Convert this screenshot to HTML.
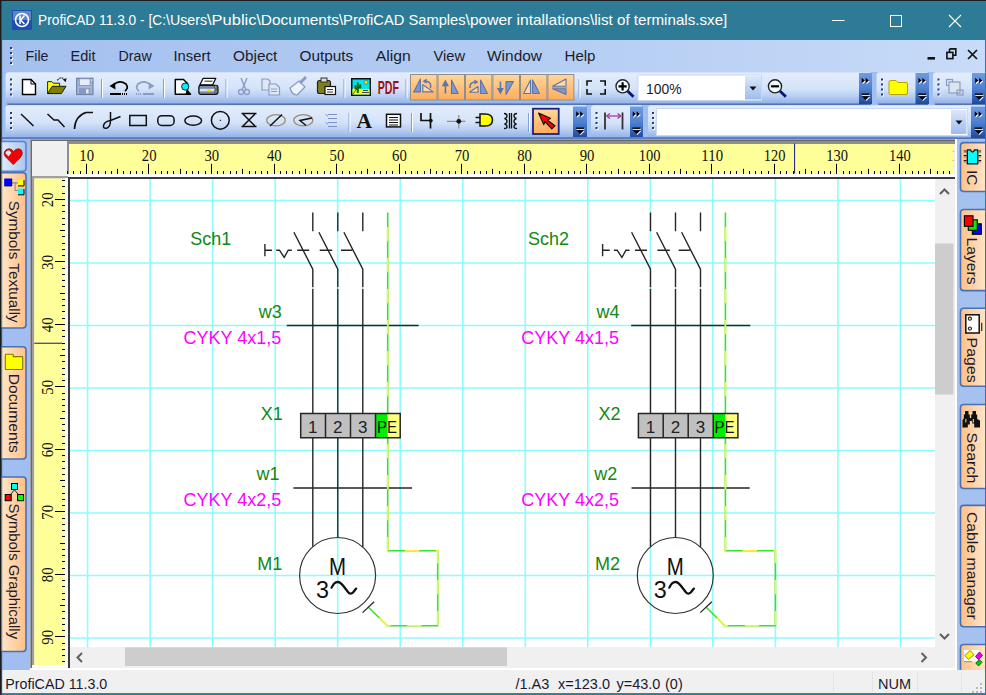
<!DOCTYPE html>
<html><head><meta charset="utf-8"><title>ProfiCAD</title>
<style>
html,body{margin:0;padding:0;background:#1c1c1c;overflow:hidden;}
body{width:986px;height:695px;position:relative;}
svg{position:absolute;left:0;top:0;display:block;}

</style></head><body>
<svg width="986" height="695" viewBox="0 0 986 695" font-family="'Liberation Sans', sans-serif">
<defs>
 <linearGradient id="menuG" x1="0" y1="0" x2="1" y2="0">
  <stop offset="0" stop-color="#a4c0ee"/><stop offset="0.55" stop-color="#b4cdf3"/><stop offset="1" stop-color="#c8dbf8"/>
 </linearGradient>
 <linearGradient id="tbG" x1="0" y1="0" x2="0" y2="1">
  <stop offset="0" stop-color="#e3edfc"/><stop offset="0.5" stop-color="#d5e3f9"/><stop offset="0.72" stop-color="#b9d0f3"/><stop offset="0.9" stop-color="#9ab8ea"/><stop offset="1" stop-color="#92b2e8"/>
 </linearGradient>
 <linearGradient id="chevG" x1="0" y1="0" x2="0" y2="1">
  <stop offset="0" stop-color="#6f9de2"/><stop offset="0.5" stop-color="#4f80d0"/><stop offset="1" stop-color="#1b4a9e"/>
 </linearGradient>
 <linearGradient id="orG" x1="0" y1="0" x2="0" y2="1">
  <stop offset="0" stop-color="#ffd79c"/><stop offset="1" stop-color="#ffac5a"/>
 </linearGradient>
 <linearGradient id="tabOr" x1="0" y1="0" x2="1" y2="0">
  <stop offset="0" stop-color="#ffe6c8"/><stop offset="1" stop-color="#ffc088"/>
 </linearGradient>
 <linearGradient id="tabOrR" x1="0" y1="0" x2="1" y2="0">
  <stop offset="0" stop-color="#ffc088"/><stop offset="1" stop-color="#ffe6c8"/>
 </linearGradient>
 <linearGradient id="tabBl" x1="0" y1="0" x2="1" y2="0">
  <stop offset="0" stop-color="#e2edfc"/><stop offset="1" stop-color="#a9c6f0"/>
 </linearGradient>
 <linearGradient id="ddG" x1="0" y1="0" x2="0" y2="1">
  <stop offset="0" stop-color="#dce8fa"/><stop offset="1" stop-color="#9dbcec"/>
 </linearGradient>
 <clipPath id="cv"><rect x="70" y="179" width="865" height="468.3"/></clipPath><clipPath id="hr"><rect x="69" y="143" width="884.5" height="31"/></clipPath>
</defs>

<rect x="1" y="1" width="985" height="39" fill="#2e7b97"/>
<rect x="12" y="10" width="20" height="20" fill="#1f4fae"/><rect x="13" y="11" width="18" height="9" fill="#5f86c8"/><circle cx="22" cy="20" r="6.5" fill="none" stroke="#fff" stroke-width="1.6"/><path d="M20 15.5 V24 M24.5 15.5 L20.5 20 L24.5 24" fill="none" stroke="#fff" stroke-width="1.5"/>
<text x="38" y="25.2" font-size="14.2" fill="#ffffff" textLength="128.0" lengthAdjust="spacingAndGlyphs">ProfiCAD 11.3.0 - [C:</text>
<text x="166" y="25.2" font-size="14.2" fill="#ffffff" textLength="41.0" lengthAdjust="spacingAndGlyphs">\Users</text>
<text x="207" y="25.2" font-size="14.2" fill="#ffffff" textLength="49.5" lengthAdjust="spacingAndGlyphs">\Public</text>
<text x="256.5" y="25.2" font-size="14.2" fill="#ffffff" textLength="82.5" lengthAdjust="spacingAndGlyphs">\Documents</text>
<text x="339" y="25.2" font-size="14.2" fill="#ffffff" textLength="126.6" lengthAdjust="spacingAndGlyphs">\ProfiCAD Samples</text>
<text x="465.6" y="25.2" font-size="14.2" fill="#ffffff" textLength="124.4" lengthAdjust="spacingAndGlyphs">\power intallations</text>
<text x="590" y="25.2" font-size="14.2" fill="#ffffff" textLength="137.3" lengthAdjust="spacingAndGlyphs">\list of terminals.sxe]</text>
<path d="M832 20.5 H844.5" stroke="#fff" stroke-width="1"/>
<rect x="890.5" y="15.5" width="11" height="11" fill="none" stroke="#fff" stroke-width="1"/>
<path d="M949 15 L961 27 M961 15 L949 27" stroke="#fff" stroke-width="1.1"/>
<rect x="2" y="40" width="983" height="630" fill="#a0bef0"/>
<rect x="2" y="40" width="983" height="32" fill="url(#menuG)"/>
<rect x="11" y="48" width="2" height="2" fill="#ffffff"/><rect x="10" y="47" width="2" height="2" fill="#27387a"/><rect x="11" y="53" width="2" height="2" fill="#ffffff"/><rect x="10" y="52" width="2" height="2" fill="#27387a"/><rect x="11" y="58" width="2" height="2" fill="#ffffff"/><rect x="10" y="57" width="2" height="2" fill="#27387a"/><rect x="11" y="63" width="2" height="2" fill="#ffffff"/><rect x="10" y="62" width="2" height="2" fill="#27387a"/>
<text x="25.5" y="60.6" font-size="14.3" fill="#1b1b2e" textLength="23" lengthAdjust="spacingAndGlyphs">File</text>
<text x="70.5" y="60.6" font-size="14.3" fill="#1b1b2e" textLength="25" lengthAdjust="spacingAndGlyphs">Edit</text>
<text x="118.5" y="60.6" font-size="14.3" fill="#1b1b2e" textLength="33.2" lengthAdjust="spacingAndGlyphs">Draw</text>
<text x="173.5" y="60.6" font-size="14.3" fill="#1b1b2e" textLength="37" lengthAdjust="spacingAndGlyphs">Insert</text>
<text x="233" y="60.6" font-size="14.3" fill="#1b1b2e" textLength="44.4" lengthAdjust="spacingAndGlyphs">Object</text>
<text x="299.5" y="60.6" font-size="14.3" fill="#1b1b2e" textLength="53.8" lengthAdjust="spacingAndGlyphs">Outputs</text>
<text x="375.8" y="60.6" font-size="14.3" fill="#1b1b2e" textLength="35" lengthAdjust="spacingAndGlyphs">Align</text>
<text x="433.5" y="60.6" font-size="14.3" fill="#1b1b2e" textLength="31.5" lengthAdjust="spacingAndGlyphs">View</text>
<text x="487" y="60.6" font-size="14.3" fill="#1b1b2e" textLength="55" lengthAdjust="spacingAndGlyphs">Window</text>
<text x="564.5" y="60.6" font-size="14.3" fill="#1b1b2e" textLength="31" lengthAdjust="spacingAndGlyphs">Help</text>
<rect x="927.5" y="57" width="7.5" height="2.6" fill="#111"/>
<path d="M949.5 48.9 H955.8 V55.2 H952.5 M949.5 48.9 V52" fill="none" stroke="#111" stroke-width="1.6"/><rect x="946.9" y="52.4" width="6" height="6.2" fill="none" stroke="#111" stroke-width="1.6"/>
<path d="M968 50 L977 59 M977 50 L968 59" stroke="#111" stroke-width="1.7"/>
<rect x="5.5" y="72.3" width="866.5" height="32.7" rx="3" fill="url(#tbG)"/><rect x="7.5" y="103.4" width="863.5" height="1.6" fill="#5474b4"/>
<rect x="859" y="73" width="13" height="31" fill="url(#chevG)"/><path d="M862.5 78.60000000000001 L865.6999999999999 81.4 L862.5 84.2 Z M866.5 78.60000000000001 L869.6999999999999 81.4 L866.5 84.2 Z" fill="#ffffff"/><path d="M861.7 77.7 L864.9 80.5 L861.7 83.3 Z M865.7 77.7 L868.9 80.5 L865.7 83.3 Z" fill="#000000"/><rect x="861.9" y="94.4" width="8" height="1.4" fill="#fff"/><path d="M862.3 97.1 H870.3 L866.3 101.1 Z" fill="#fff"/><rect x="861.5" y="93.5" width="8" height="1.4" fill="#000"/><path d="M861.5 96.2 H869.5 L865.5 100.2 Z" fill="#000"/>
<rect x="876.5" y="72.3" width="52.5" height="32.7" rx="3" fill="url(#tbG)"/><rect x="878.5" y="103.4" width="49.5" height="1.6" fill="#5474b4"/>
<rect x="915.5" y="73" width="13.5" height="31" fill="url(#chevG)"/><path d="M919.25 78.60000000000001 L922.4499999999999 81.4 L919.25 84.2 Z M923.25 78.60000000000001 L926.4499999999999 81.4 L923.25 84.2 Z" fill="#ffffff"/><path d="M918.45 77.7 L921.65 80.5 L918.45 83.3 Z M922.45 77.7 L925.65 80.5 L922.45 83.3 Z" fill="#000000"/><rect x="918.65" y="94.4" width="8" height="1.4" fill="#fff"/><path d="M919.05 97.1 H927.05 L923.05 101.1 Z" fill="#fff"/><rect x="918.25" y="93.5" width="8" height="1.4" fill="#000"/><path d="M918.25 96.2 H926.25 L922.25 100.2 Z" fill="#000"/>
<rect x="933" y="72.3" width="57" height="32.7" rx="3" fill="url(#tbG)"/><rect x="935" y="103.4" width="54" height="1.6" fill="#5474b4"/>
<rect x="972" y="73" width="14" height="31" fill="url(#chevG)"/><path d="M976.0 78.60000000000001 L979.1999999999999 81.4 L976.0 84.2 Z M980.0 78.60000000000001 L983.1999999999999 81.4 L980.0 84.2 Z" fill="#ffffff"/><path d="M975.2 77.7 L978.4 80.5 L975.2 83.3 Z M979.2 77.7 L982.4 80.5 L979.2 83.3 Z" fill="#000000"/><rect x="975.4" y="94.4" width="8" height="1.4" fill="#fff"/><path d="M975.8 97.1 H983.8 L979.8 101.1 Z" fill="#fff"/><rect x="975.0" y="93.5" width="8" height="1.4" fill="#000"/><path d="M975.0 96.2 H983.0 L979.0 100.2 Z" fill="#000"/>
<rect x="5.5" y="105.3" width="581.5" height="33.7" rx="3" fill="url(#tbG)"/><rect x="7.5" y="137.4" width="578.5" height="1.6" fill="#5474b4"/>
<rect x="573" y="106.5" width="14" height="31.5" fill="url(#chevG)"/><path d="M577.0 112.10000000000001 L580.1999999999999 114.9 L577.0 117.7 Z M581.0 112.10000000000001 L584.1999999999999 114.9 L581.0 117.7 Z" fill="#ffffff"/><path d="M576.2 111.2 L579.4 114.0 L576.2 116.8 Z M580.2 111.2 L583.4 114.0 L580.2 116.8 Z" fill="#000000"/><rect x="576.4" y="128.4" width="8" height="1.4" fill="#fff"/><path d="M576.8 131.1 H584.8 L580.8 135.1 Z" fill="#fff"/><rect x="576.0" y="127.5" width="8" height="1.4" fill="#000"/><path d="M576.0 130.2 H584.0 L580.0 134.2 Z" fill="#000"/>
<rect x="591" y="105.3" width="52" height="33.7" rx="3" fill="url(#tbG)"/><rect x="593" y="137.4" width="49" height="1.6" fill="#5474b4"/>
<rect x="630" y="106.5" width="13" height="31.5" fill="url(#chevG)"/><path d="M633.5 112.10000000000001 L636.6999999999999 114.9 L633.5 117.7 Z M637.5 112.10000000000001 L640.6999999999999 114.9 L637.5 117.7 Z" fill="#ffffff"/><path d="M632.7 111.2 L635.9 114.0 L632.7 116.8 Z M636.7 111.2 L639.9 114.0 L636.7 116.8 Z" fill="#000000"/><rect x="632.9" y="128.4" width="8" height="1.4" fill="#fff"/><path d="M633.3 131.1 H641.3 L637.3 135.1 Z" fill="#fff"/><rect x="632.5" y="127.5" width="8" height="1.4" fill="#000"/><path d="M632.5 130.2 H640.5 L636.5 134.2 Z" fill="#000"/>
<rect x="648" y="105.3" width="342" height="33.7" rx="3" fill="url(#tbG)"/><rect x="650" y="137.4" width="339" height="1.6" fill="#5474b4"/>
<rect x="971" y="106.5" width="15" height="31.5" fill="url(#chevG)"/><path d="M975.5 112.10000000000001 L978.6999999999999 114.9 L975.5 117.7 Z M979.5 112.10000000000001 L982.6999999999999 114.9 L979.5 117.7 Z" fill="#ffffff"/><path d="M974.7 111.2 L977.9 114.0 L974.7 116.8 Z M978.7 111.2 L981.9 114.0 L978.7 116.8 Z" fill="#000000"/><rect x="974.9" y="128.4" width="8" height="1.4" fill="#fff"/><path d="M975.3 131.1 H983.3 L979.3 135.1 Z" fill="#fff"/><rect x="974.5" y="127.5" width="8" height="1.4" fill="#000"/><path d="M974.5 130.2 H982.5 L978.5 134.2 Z" fill="#000"/>
<rect x="11" y="79.5" width="2" height="2" fill="#ffffff"/><rect x="10" y="78.5" width="2" height="2" fill="#27387a"/><rect x="11" y="84.5" width="2" height="2" fill="#ffffff"/><rect x="10" y="83.5" width="2" height="2" fill="#27387a"/><rect x="11" y="89.5" width="2" height="2" fill="#ffffff"/><rect x="10" y="88.5" width="2" height="2" fill="#27387a"/><rect x="11" y="94.5" width="2" height="2" fill="#ffffff"/><rect x="10" y="93.5" width="2" height="2" fill="#27387a"/>
<rect x="882" y="79.5" width="2" height="2" fill="#ffffff"/><rect x="881" y="78.5" width="2" height="2" fill="#27387a"/><rect x="882" y="84.5" width="2" height="2" fill="#ffffff"/><rect x="881" y="83.5" width="2" height="2" fill="#27387a"/><rect x="882" y="89.5" width="2" height="2" fill="#ffffff"/><rect x="881" y="88.5" width="2" height="2" fill="#27387a"/><rect x="882" y="94.5" width="2" height="2" fill="#ffffff"/><rect x="881" y="93.5" width="2" height="2" fill="#27387a"/>
<rect x="938.5" y="79.5" width="2" height="2" fill="#ffffff"/><rect x="937.5" y="78.5" width="2" height="2" fill="#27387a"/><rect x="938.5" y="84.5" width="2" height="2" fill="#ffffff"/><rect x="937.5" y="83.5" width="2" height="2" fill="#27387a"/><rect x="938.5" y="89.5" width="2" height="2" fill="#ffffff"/><rect x="937.5" y="88.5" width="2" height="2" fill="#27387a"/><rect x="938.5" y="94.5" width="2" height="2" fill="#ffffff"/><rect x="937.5" y="93.5" width="2" height="2" fill="#27387a"/>
<rect x="11" y="113" width="2" height="2" fill="#ffffff"/><rect x="10" y="112" width="2" height="2" fill="#27387a"/><rect x="11" y="118" width="2" height="2" fill="#ffffff"/><rect x="10" y="117" width="2" height="2" fill="#27387a"/><rect x="11" y="123" width="2" height="2" fill="#ffffff"/><rect x="10" y="122" width="2" height="2" fill="#27387a"/><rect x="11" y="128" width="2" height="2" fill="#ffffff"/><rect x="10" y="127" width="2" height="2" fill="#27387a"/>
<rect x="596.5" y="113" width="2" height="2" fill="#ffffff"/><rect x="595.5" y="112" width="2" height="2" fill="#27387a"/><rect x="596.5" y="118" width="2" height="2" fill="#ffffff"/><rect x="595.5" y="117" width="2" height="2" fill="#27387a"/><rect x="596.5" y="123" width="2" height="2" fill="#ffffff"/><rect x="595.5" y="122" width="2" height="2" fill="#27387a"/><rect x="596.5" y="128" width="2" height="2" fill="#ffffff"/><rect x="595.5" y="127" width="2" height="2" fill="#27387a"/>
<rect x="653" y="113" width="2" height="2" fill="#ffffff"/><rect x="652" y="112" width="2" height="2" fill="#27387a"/><rect x="653" y="118" width="2" height="2" fill="#ffffff"/><rect x="652" y="117" width="2" height="2" fill="#27387a"/><rect x="653" y="123" width="2" height="2" fill="#ffffff"/><rect x="652" y="122" width="2" height="2" fill="#27387a"/><rect x="653" y="128" width="2" height="2" fill="#ffffff"/><rect x="652" y="127" width="2" height="2" fill="#27387a"/>
<path d="M22.5 79.5 H31 L35.5 84 V94.5 H22.5 Z" fill="#fff" stroke="#000" stroke-width="1.4"/><path d="M31 79.5 V84 H35.5" fill="none" stroke="#000" stroke-width="1"/><path d="M47.6 81.6 H51.8 L53.3 83.2 H59.6 V93.5 H47.6 Z" fill="#ffff00" stroke="#222" stroke-width="1"/><path d="M47.6 93.6 L52.2 86.3 H66 L61.4 93.6 Z" fill="#808000" stroke="#1a1a1a" stroke-width="1" stroke-linejoin="round"/><path d="M57.3 80.3 Q60.5 76.2 64 78.8" fill="none" stroke="#222" stroke-width="1.2" stroke-dasharray="1.6 1"/><path d="M62.6 79.3 L66.6 78.3 L65.6 82.3 Z" fill="#111"/><rect x="76.7" y="78.3" width="16.2" height="16.2" fill="#a9b8d8" stroke="#7283ac" stroke-width="1.3"/><rect x="79.3" y="78.8" width="10.8" height="6.8" fill="#e6edf8" stroke="#7d8db4" stroke-width="0.8"/><rect x="79" y="88.2" width="11.4" height="6" fill="#8797bd"/><rect x="86" y="89.2" width="2.6" height="4.2" fill="#e6edf8"/><rect x="91.2" y="79.4" width="1" height="1.2" fill="#fff"/><rect x="101" y="79" width="1" height="19" fill="#7f9fd6"/><rect x="102" y="79" width="1" height="19" fill="#ffffff"/><path d="M113 85.5 Q119 79 126 84 Q129 88 125 91" fill="none" stroke="#000" stroke-width="1.6"/><path d="M109.5 86 L115 82.5 L115.5 89.5 Z" fill="#000"/><rect x="110" y="93" width="11" height="2" fill="#000"/><rect x="122" y="93" width="1" height="2" fill="#000"/><rect x="124" y="93" width="1" height="2" fill="#000"/><rect x="126" y="93" width="1" height="2" fill="#000"/><path d="M151 85.5 Q145 79 138 84 Q135 88 139 91" fill="none" stroke="#8a9cc4" stroke-width="1.6"/><path d="M154.5 86 L149 82.5 L148.5 89.5 Z" fill="#8a9cc4"/><rect x="143" y="93" width="11" height="2" fill="#8a9cc4"/><rect x="136" y="93" width="1" height="2" fill="#8a9cc4"/><rect x="138" y="93" width="1" height="2" fill="#8a9cc4"/><rect x="140" y="93" width="1" height="2" fill="#8a9cc4"/><rect x="163" y="79" width="1" height="19" fill="#7f9fd6"/><rect x="164" y="79" width="1" height="19" fill="#ffffff"/><path d="M175.3 79.5 H183.5 L187.5 83.5 V91 L190.5 94.3 H175.3 Z" fill="#fff" stroke="#000" stroke-width="1.5" stroke-linejoin="round"/><path d="M186.5 90 L190.5 94.3 H185.5 Z" fill="#000"/><circle cx="185.2" cy="86.6" r="3.6" fill="#00f0ff" stroke="#111" stroke-width="0.9"/><path d="M203.2 78.3 H215.8 L212.6 85 H199.8 Z" fill="#fff" stroke="#111" stroke-width="1.3" stroke-linejoin="round"/><path d="M204.5 81.2 H212.5" stroke="#555" stroke-width="1.3"/><rect x="198.9" y="85.3" width="19" height="9" rx="1.8" fill="#7d8aa3" stroke="#111" stroke-width="1.3"/><rect x="199.8" y="88.8" width="14.5" height="2.6" fill="#d2e5fb"/><rect x="207" y="89.2" width="4" height="1.8" fill="#f2e400"/><circle cx="215.8" cy="87" r="1.4" fill="#9aa" stroke="#333" stroke-width="0.7"/><circle cx="216" cy="91.5" r="1.4" fill="#9aa" stroke="#333" stroke-width="0.7"/><rect x="225.5" y="79" width="1" height="19" fill="#7f9fd6"/><rect x="226.5" y="79" width="1" height="19" fill="#ffffff"/><path d="M241 78 L246 90 M247 78 L242 90" stroke="#8a9cc4" stroke-width="1.4"/><circle cx="241" cy="92" r="2.5" fill="none" stroke="#8a9cc4" stroke-width="1.3"/><circle cx="247" cy="92" r="2.5" fill="none" stroke="#8a9cc4" stroke-width="1.3"/><path d="M262 79 H268 L270 81 V90 H262 Z" fill="#dfe7f6" stroke="#8a9cc4" stroke-width="1.2"/><path d="M269 84 H276 L279.5 87.5 V95 H269 Z" fill="#dfe7f6" stroke="#8a9cc4" stroke-width="1.2"/><path d="M271 89 H277 M271 91.5 H277" stroke="#8a9cc4" stroke-width="1"/><path d="M290 88 L299 81 L305 87 L297 95 Q292 95 290 88 Z" fill="#eef2fa" stroke="#8a9cc4" stroke-width="1.3"/><path d="M300 83 L306 77" stroke="#8a9cc4" stroke-width="3"/><rect x="289" y="95.5" width="8" height="2" fill="#c8d2e6"/><rect x="317.5" y="80.5" width="13" height="13" rx="2" fill="#7f7f1a" stroke="#222" stroke-width="1.2"/><rect x="321" y="78" width="6" height="4" fill="#ddd" stroke="#333" stroke-width="1"/><rect x="325" y="86.5" width="10.5" height="8" fill="#fff" stroke="#111" stroke-width="1.2"/><path d="M327 89.5 H333 M327 92 H333" stroke="#333" stroke-width="1"/><rect x="343.5" y="79" width="1" height="19" fill="#7f9fd6"/><rect x="344.5" y="79" width="1" height="19" fill="#ffffff"/><rect x="351" y="78" width="20" height="18" fill="#111"/><rect x="352.5" y="79.5" width="17" height="15" fill="#00e6f0"/><path d="M352.5 94.5 V89 L356 87.5 L361 89 H369.5 V94.5 Z" fill="#ffff00"/><path d="M352.5 94.5 L358 87.5" stroke="#333" stroke-width="0.8"/><circle cx="366" cy="82.3" r="1.9" fill="#ffe000" stroke="#555" stroke-width="0.6"/><path d="M357.8 93 V82.5 M355.5 85 V88.5 H357.8 M360.2 84.2 V87.5 H357.8" fill="none" stroke="#0a6a18" stroke-width="2"/><path d="M362 92.5 H369 M363 90.5 H368" stroke="#444" stroke-width="1.1"/><text x="377.8" y="94" font-family="'Liberation Sans', sans-serif" font-weight="bold" font-size="19" fill="#9e1010" textLength="21.2" lengthAdjust="spacingAndGlyphs">PDF</text><rect x="405.5" y="79" width="1" height="19" fill="#7f9fd6"/><rect x="406.5" y="79" width="1" height="19" fill="#ffffff"/><rect x="410.5" y="74.5" width="26.5" height="25.5" fill="url(#orG)" stroke="#8e8e8e" stroke-width="1"/><rect x="438.0" y="74.5" width="26.5" height="25.5" fill="url(#orG)" stroke="#8e8e8e" stroke-width="1"/><rect x="465.5" y="74.5" width="26.399999999999977" height="25.5" fill="url(#orG)" stroke="#8e8e8e" stroke-width="1"/><rect x="492.9" y="74.5" width="26.600000000000023" height="25.5" fill="url(#orG)" stroke="#8e8e8e" stroke-width="1"/><rect x="520.5" y="74.5" width="26.399999999999977" height="25.5" fill="url(#orG)" stroke="#8e8e8e" stroke-width="1"/><rect x="547.9" y="74.5" width="26.0" height="25.5" fill="url(#orG)" stroke="#8e8e8e" stroke-width="1"/><path d="M420.4 79 V91.9 H413.7 Z" fill="#7f98cc" stroke="#5a74b0" stroke-width="1.1" stroke-linejoin="round"/><path d="M422.8 84.8 V91.9 H433.3 Z" fill="#ffd8a8" stroke="#5a74b0" stroke-width="1.1" stroke-linejoin="round"/><path d="M430.5 88 Q432 82 426 81.2" fill="none" stroke="#5a74b0" stroke-width="1.5"/><path d="M422.6 81.2 L426.6 78.6 V83.8 Z" fill="#5a74b0"/><path d="M445.4 84 V93.5" stroke="#5a74b0" stroke-width="1.6"/><path d="M441.8 86.2 L445.4 79.5 L449 86.2 Z" fill="#5a74b0"/><path d="M451.5 80 V93.5 H458.2 Z" fill="#7f98cc" stroke="#5a74b0" stroke-width="1.1" stroke-linejoin="round"/><path d="M469.5 92.3 H478 V86.5 Z" fill="#ffd8a8" stroke="#5a74b0" stroke-width="1.1" stroke-linejoin="round"/><path d="M470 88 Q469.5 82.5 474.5 82" fill="none" stroke="#5a74b0" stroke-width="1.5"/><path d="M478.5 82 L474.3 79.4 V84.6 Z" fill="#5a74b0"/><path d="M480.6 80 V93.5 H487.4 Z" fill="#7f98cc" stroke="#5a74b0" stroke-width="1.1" stroke-linejoin="round"/><path d="M500.4 81.6 V91" stroke="#5a74b0" stroke-width="1.6"/><path d="M497 88 L500.4 94.6 L503.8 88 Z" fill="#5a74b0"/><path d="M506 81.6 H513.5 L506 94.6 Z" fill="#7f98cc" stroke="#5a74b0" stroke-width="1.1" stroke-linejoin="round"/><path d="M530.5 80 V93.5 H523.7 Z" fill="#ffd8a8" stroke="#5a74b0" stroke-width="1.1" stroke-linejoin="round"/><path d="M532.6 80 V93.5 H539.5 Z" fill="#7f98cc" stroke="#5a74b0" stroke-width="1.1" stroke-linejoin="round"/><path d="M566 79 V86.3 H552.6 Z" fill="#ffd8a8" stroke="#5a74b0" stroke-width="1.1" stroke-linejoin="round"/><path d="M552 87.5 H567" stroke="#c8a070" stroke-width="1"/><path d="M566 88.7 V94.5 L552.6 88.7 Z" fill="#7f98cc" stroke="#5a74b0" stroke-width="1.1" stroke-linejoin="round"/><rect x="578.5" y="79" width="1" height="19" fill="#7f9fd6"/><rect x="579.5" y="79" width="1" height="19" fill="#ffffff"/><path d="M592 81 H587 V85.8 M587 89 V94 H592 M600 81 H605.2 V85.8 M605.2 89 V94 H600" fill="none" stroke="#111" stroke-width="1.6"/><circle cx="622.6" cy="86.3" r="6.6" fill="#eefcff" stroke="#222" stroke-width="1.4"/><path d="M618.5 86.3 H626.7 M622.6 82.2 V90.4" stroke="#000" stroke-width="2.2"/><path d="M627.5 91 L633.5 96.8" stroke="#0a1478" stroke-width="2.8"/><rect x="638" y="75" width="123.5" height="25.5" fill="#fff" stroke="#c9d8f2" stroke-width="1"/><rect x="745" y="76" width="16" height="23.5" fill="url(#ddG)"/><path d="M749.5 86.5 H756.5 L753 90.5Z" fill="#111"/><text x="646" y="93.7" font-size="14.8" fill="#1b1b2e" textLength="35.5" lengthAdjust="spacingAndGlyphs">100%</text><circle cx="775" cy="86.3" r="6.6" fill="#eefcff" stroke="#222" stroke-width="1.4"/><path d="M770.9 86.3 H779.1" stroke="#000" stroke-width="2.2"/><path d="M779.9 91 L785.9 96.8" stroke="#0a1478" stroke-width="2.8"/><path d="M889 82 Q889 80.5 890.5 80.5 H896 L898 82.5 H906 Q907.5 82.5 907.5 84 V93 Q907.5 94.5 906 94.5 H890.5 Q889 94.5 889 93 Z" fill="#ffff00" stroke="#b8a000" stroke-width="1"/><rect x="946.5" y="79.5" width="6" height="6" fill="none" stroke="#8a9cc4" stroke-width="1.2"/><rect x="949" y="82" width="11" height="11" fill="#dde4ee" stroke="#8a9cc4" stroke-width="1.2"/><rect x="957" y="90" width="6" height="5" fill="none" stroke="#8a9cc4" stroke-width="1.2"/>
<path d="M21 114 L33.5 126" stroke="#111" stroke-width="1.5"/><path d="M47.5 114 L54 120 L58 120 L64.5 127" fill="none" stroke="#111" stroke-width="1.5"/><path d="M74.5 129 Q75 116 86 112.5 L93 112.5" fill="none" stroke="#111" stroke-width="1.6"/><path d="M110.5 112 V120.5 Q110.5 126.5 107 128 Q103 129 103.5 125.5 Q104.5 121.5 110.5 120.5 L120.5 116.5" fill="none" stroke="#111" stroke-width="1.5"/><rect x="129.8" y="115.5" width="16.5" height="10" fill="none" stroke="#111" stroke-width="1.5"/><rect x="157.8" y="115.7" width="16.3" height="9.8" rx="4" fill="none" stroke="#111" stroke-width="1.5"/><ellipse cx="193.2" cy="120.6" rx="8.4" ry="4.6" fill="none" stroke="#111" stroke-width="1.5"/><circle cx="220.3" cy="120.3" r="8.9" fill="none" stroke="#111" stroke-width="1.5"/><rect x="219.8" y="119.8" width="1.2" height="1.2" fill="#111"/><path d="M241.5 113.5 H256.5 M241.5 126.5 H256.5 M243 114 L255 126 M255 114 L243 126" fill="none" stroke="#111" stroke-width="1.5"/><ellipse cx="276" cy="120.3" rx="9.3" ry="5.6" fill="none" stroke="#9a8a70" stroke-width="1.3"/><path d="M270 126 L282 114.5" stroke="#111" stroke-width="1.5"/><ellipse cx="303.3" cy="120.3" rx="9.6" ry="5.6" fill="none" stroke="#9a8a70" stroke-width="1.3"/><path d="M312 118 L300 120.5 L306 125.5" fill="none" stroke="#111" stroke-width="1.5"/><path d="M328 114.5 H337 M328 118.5 H337 M328 122.5 H337 M328 126.5 H337" stroke="#7d92c2" stroke-width="1.2"/><path d="M325.5 114.5 L328 116 M325.5 122.5 L328 124" stroke="#7d92c2" stroke-width="1"/><rect x="348.5" y="113" width="1" height="19" fill="#7f9fd6"/><rect x="349.5" y="113" width="1" height="19" fill="#ffffff"/><text x="356.5" y="128.2" font-family="'Liberation Serif', serif" font-weight="bold" font-size="21.5" fill="#111">A</text><rect x="386.5" y="114.3" width="14" height="12.6" fill="#fff" stroke="#111" stroke-width="1.5"/><path d="M389 117.5 H398 M389 120 H398 M389 122.5 H398 M389 125 H398" stroke="#111" stroke-width="1.1"/><rect x="411" y="113" width="1" height="19" fill="#7f9fd6"/><rect x="412" y="113" width="1" height="19" fill="#ffffff"/><path d="M421 113 V120.5 H432 M430.5 113 V128.5" fill="none" stroke="#111" stroke-width="1.7"/><circle cx="430.8" cy="120.6" r="1.9" fill="#111"/><path d="M447 121.3 H465.5 M458.8 115 V128.5" stroke="#8e8e8e" stroke-width="1.2"/><circle cx="458.8" cy="121.3" r="2.4" fill="#111"/><path d="M480 114 H485 Q492.5 114 492.5 120 Q492.5 126 485 126 H480 Z" fill="#ffff00" stroke="#111" stroke-width="1.5"/><path d="M475.5 117.5 H480 M475.5 122.5 H480" stroke="#111" stroke-width="1.5"/><path d="M504 113.5 Q507 113.5 507 116 Q507 118 504.5 118.5 Q507 119 507 121.5 Q507 123.5 504.5 124 Q507 124.5 507 127 Q507 128.5 504 128.5 M509.5 113 V128.5 M511.5 113 V128.5 M517 113.5 Q514 113.5 514 116 Q514 118 516.5 118.5 Q514 119 514 121.5 Q514 123.5 516.5 124 Q514 124.5 514 127 Q514 128.5 517 128.5" fill="none" stroke="#111" stroke-width="1.3"/><rect x="528" y="113" width="1" height="19" fill="#7f9fd6"/><rect x="529" y="113" width="1" height="19" fill="#ffffff"/><rect x="533" y="108.7" width="25.7" height="25.3" fill="url(#orG)" stroke="#1a237e" stroke-width="1.8"/><path d="M538.5 113 L550.5 118.3 L547.5 120.3 L555 125.8 L551.8 128.8 L544.8 121.5 L543.8 124.8 Z" fill="#ff0000" stroke="#111" stroke-width="1.1" stroke-linejoin="round"/><path d="M605 112.6 V129.4 M622.5 112.6 V129.4" stroke="#333" stroke-width="1.8"/><path d="M606.5 116 H621" stroke="#a0309e" stroke-width="1.2"/><path d="M606.5 116 L610 113.5 M606.5 116 L610 118.5 M621 116 L617.5 113.5 M621 116 L617.5 118.5" stroke="#a0309e" stroke-width="1.1"/><rect x="656.5" y="108.5" width="311" height="27" fill="#fff" stroke="#c9d8f2" stroke-width="1"/><rect x="951" y="110" width="15.5" height="24" fill="url(#ddG)"/><path d="M955.5 120.5 H962.5 L959 124.5Z" fill="#111"/>
<rect x="30" y="139" width="926" height="531" fill="#a0a0a0"/>
<rect x="31" y="140" width="925" height="530" fill="#696969"/>
<rect x="32" y="141" width="924" height="528" fill="#f0f0f0"/>
<rect x="67" y="141" width="889" height="3" fill="#8e8e8e"/><rect x="67" y="141" width="2" height="35" fill="#8e8e8e"/>
<rect x="69" y="144" width="884.5" height="30" fill="#ffff99"/>
<rect x="67" y="174" width="889" height="3" fill="#ffffff"/>
<rect x="32" y="176" width="36" height="2.5" fill="#a0a0a0"/><rect x="32" y="176" width="2.3" height="490" fill="#a0a0a0"/>
<rect x="34.3" y="178.5" width="30.5" height="486.5" fill="#ffff99"/>
<rect x="64.8" y="178" width="3" height="489" fill="#ffffff"/><rect x="32" y="665" width="36" height="2.5" fill="#ffffff"/>
<rect x="67.7" y="176.5" width="288" height="0" fill="none"/>
<rect x="68" y="177" width="888" height="2" fill="#3a3a3a"/><rect x="68" y="177" width="2" height="491.5" fill="#3a3a3a"/>
<rect x="70" y="179" width="865" height="468.3" fill="#ffffff"/>
<rect x="935" y="179" width="20" height="489" fill="#f0f0f0"/>
<rect x="935" y="243.5" width="18.5" height="151" fill="#cdcdcd"/>
<path d="M940 194 L944.5 189.5 L949 194" fill="none" stroke="#606060" stroke-width="2"/>
<path d="M940 634 L944.5 638.5 L949 634" fill="none" stroke="#606060" stroke-width="2"/>
<rect x="70" y="647.3" width="885" height="21" fill="#f0f0f0"/>
<rect x="125" y="647.3" width="382" height="18.7" fill="#cdcdcd"/>
<path d="M82 653 L77.5 657.5 L82 662" fill="none" stroke="#606060" stroke-width="2"/>
<path d="M921.5 653 L926 657.5 L921.5 662" fill="none" stroke="#606060" stroke-width="2"/>
<rect x="30" y="668" width="926" height="2" fill="#ffffff"/>
<path d="M67.5 171 V174 M73.5 171 V174 M80.5 171 V174 M86.5 163.8 V174 M92.5 171 V174 M98.5 171 V174 M105.5 171 V174 M111.5 171 V174 M117.5 168.8 V174 M123.5 171 V174 M130.5 171 V174 M136.5 171 V174 M142.5 171 V174 M148.5 163.8 V174 M155.5 171 V174 M161.5 171 V174 M167.5 171 V174 M173.5 171 V174 M180.5 168.8 V174 M186.5 171 V174 M192.5 171 V174 M198.5 171 V174 M205.5 171 V174 M211.5 163.8 V174 M217.5 171 V174 M223.5 171 V174 M230.5 171 V174 M236.5 171 V174 M242.5 168.8 V174 M249.5 171 V174 M255.5 171 V174 M261.5 171 V174 M267.5 171 V174 M274.5 163.8 V174 M280.5 171 V174 M286.5 171 V174 M292.5 171 V174 M299.5 171 V174 M305.5 168.8 V174 M311.5 171 V174 M317.5 171 V174 M324.5 171 V174 M330.5 171 V174 M336.5 163.8 V174 M342.5 171 V174 M349.5 171 V174 M355.5 171 V174 M361.5 171 V174 M367.5 168.8 V174 M374.5 171 V174 M380.5 171 V174 M386.5 171 V174 M392.5 171 V174 M399.5 163.8 V174 M405.5 171 V174 M411.5 171 V174 M417.5 171 V174 M424.5 171 V174 M430.5 168.8 V174 M436.5 171 V174 M442.5 171 V174 M449.5 171 V174 M455.5 171 V174 M461.5 163.8 V174 M467.5 171 V174 M474.5 171 V174 M480.5 171 V174 M486.5 171 V174 M492.5 168.8 V174 M499.5 171 V174 M505.5 171 V174 M511.5 171 V174 M517.5 171 V174 M524.5 163.8 V174 M530.5 171 V174 M536.5 171 V174 M542.5 171 V174 M549.5 171 V174 M555.5 168.8 V174 M561.5 171 V174 M568.5 171 V174 M574.5 171 V174 M580.5 171 V174 M586.5 163.8 V174 M593.5 171 V174 M599.5 171 V174 M605.5 171 V174 M611.5 171 V174 M618.5 168.8 V174 M624.5 171 V174 M630.5 171 V174 M636.5 171 V174 M643.5 171 V174 M649.5 163.8 V174 M655.5 171 V174 M661.5 171 V174 M668.5 171 V174 M674.5 171 V174 M680.5 168.8 V174 M686.5 171 V174 M693.5 171 V174 M699.5 171 V174 M705.5 171 V174 M711.5 163.8 V174 M718.5 171 V174 M724.5 171 V174 M730.5 171 V174 M736.5 171 V174 M743.5 168.8 V174 M749.5 171 V174 M755.5 171 V174 M761.5 171 V174 M768.5 171 V174 M774.5 163.8 V174 M780.5 171 V174 M786.5 171 V174 M793.5 171 V174 M799.5 171 V174 M805.5 168.8 V174 M811.5 171 V174 M818.5 171 V174 M824.5 171 V174 M830.5 171 V174 M836.5 163.8 V174 M843.5 171 V174 M849.5 171 V174 M855.5 171 V174 M861.5 171 V174 M868.5 168.8 V174 M874.5 171 V174 M880.5 171 V174 M886.5 171 V174 M893.5 171 V174 M899.5 163.8 V174 M905.5 171 V174 M912.5 171 V174 M918.5 171 V174 M924.5 171 V174 M930.5 168.8 V174 M937.5 171 V174 M943.5 171 V174 M949.5 171 V174" stroke="#000" stroke-width="1"/>
<g clip-path="url(#hr)">
<text x="86.7" y="161" font-family="'Liberation Serif', serif" font-size="16" fill="#111" text-anchor="middle" textLength="14.7" lengthAdjust="spacingAndGlyphs">10</text>
<text x="149.2" y="161" font-family="'Liberation Serif', serif" font-size="16" fill="#111" text-anchor="middle" textLength="14.7" lengthAdjust="spacingAndGlyphs">20</text>
<text x="211.8" y="161" font-family="'Liberation Serif', serif" font-size="16" fill="#111" text-anchor="middle" textLength="14.7" lengthAdjust="spacingAndGlyphs">30</text>
<text x="274.3" y="161" font-family="'Liberation Serif', serif" font-size="16" fill="#111" text-anchor="middle" textLength="14.7" lengthAdjust="spacingAndGlyphs">40</text>
<text x="336.9" y="161" font-family="'Liberation Serif', serif" font-size="16" fill="#111" text-anchor="middle" textLength="14.7" lengthAdjust="spacingAndGlyphs">50</text>
<text x="399.4" y="161" font-family="'Liberation Serif', serif" font-size="16" fill="#111" text-anchor="middle" textLength="14.7" lengthAdjust="spacingAndGlyphs">60</text>
<text x="462.0" y="161" font-family="'Liberation Serif', serif" font-size="16" fill="#111" text-anchor="middle" textLength="14.7" lengthAdjust="spacingAndGlyphs">70</text>
<text x="524.5" y="161" font-family="'Liberation Serif', serif" font-size="16" fill="#111" text-anchor="middle" textLength="14.7" lengthAdjust="spacingAndGlyphs">80</text>
<text x="587.1" y="161" font-family="'Liberation Serif', serif" font-size="16" fill="#111" text-anchor="middle" textLength="14.7" lengthAdjust="spacingAndGlyphs">90</text>
<text x="649.6" y="161" font-family="'Liberation Serif', serif" font-size="16" fill="#111" text-anchor="middle" textLength="21.7" lengthAdjust="spacingAndGlyphs">100</text>
<text x="712.2" y="161" font-family="'Liberation Serif', serif" font-size="16" fill="#111" text-anchor="middle" textLength="21.7" lengthAdjust="spacingAndGlyphs">110</text>
<text x="774.7" y="161" font-family="'Liberation Serif', serif" font-size="16" fill="#111" text-anchor="middle" textLength="21.7" lengthAdjust="spacingAndGlyphs">120</text>
<text x="837.2" y="161" font-family="'Liberation Serif', serif" font-size="16" fill="#111" text-anchor="middle" textLength="21.7" lengthAdjust="spacingAndGlyphs">130</text>
<text x="899.8" y="161" font-family="'Liberation Serif', serif" font-size="16" fill="#111" text-anchor="middle" textLength="21.7" lengthAdjust="spacingAndGlyphs">140</text>
<text x="962.3" y="161" font-family="'Liberation Serif', serif" font-size="16" fill="#111" text-anchor="middle" textLength="21.7" lengthAdjust="spacingAndGlyphs">150</text>
</g>
<path d="M62 180.5 H65 M62 186.5 H65 M62 193.5 H65 M55 199.5 H65 M62 205.5 H65 M62 211.5 H65 M62 218.5 H65 M62 224.5 H65 M60 230.5 H65 M62 236.5 H65 M62 243.5 H65 M62 249.5 H65 M62 255.5 H65 M55 261.5 H65 M62 268.5 H65 M62 274.5 H65 M62 280.5 H65 M62 286.5 H65 M60 293.5 H65 M62 299.5 H65 M62 305.5 H65 M62 311.5 H65 M62 318.5 H65 M55 324.5 H65 M62 330.5 H65 M62 336.5 H65 M62 343.5 H65 M62 349.5 H65 M60 355.5 H65 M62 361.5 H65 M62 368.5 H65 M62 374.5 H65 M62 380.5 H65 M55 386.5 H65 M62 393.5 H65 M62 399.5 H65 M62 405.5 H65 M62 411.5 H65 M60 418.5 H65 M62 424.5 H65 M62 430.5 H65 M62 436.5 H65 M62 443.5 H65 M55 449.5 H65 M62 455.5 H65 M62 461.5 H65 M62 468.5 H65 M62 474.5 H65 M60 480.5 H65 M62 486.5 H65 M62 493.5 H65 M62 499.5 H65 M62 505.5 H65 M55 511.5 H65 M62 518.5 H65 M62 524.5 H65 M62 530.5 H65 M62 536.5 H65 M60 543.5 H65 M62 549.5 H65 M62 555.5 H65 M62 561.5 H65 M62 568.5 H65 M55 574.5 H65 M62 580.5 H65 M62 586.5 H65 M62 593.5 H65 M62 599.5 H65 M60 605.5 H65 M62 611.5 H65 M62 618.5 H65 M62 624.5 H65 M62 630.5 H65 M55 636.5 H65 M62 643.5 H65 M62 649.5 H65 M62 655.5 H65 M62 661.5 H65" stroke="#000" stroke-width="1"/>
<text transform="translate(52.5 199.8) rotate(-90)" x="0" y="0" font-family="'Liberation Serif', serif" font-size="16" fill="#111" text-anchor="middle" textLength="14.7" lengthAdjust="spacingAndGlyphs">20</text>
<text transform="translate(52.5 262.3) rotate(-90)" x="0" y="0" font-family="'Liberation Serif', serif" font-size="16" fill="#111" text-anchor="middle" textLength="14.7" lengthAdjust="spacingAndGlyphs">30</text>
<text transform="translate(52.5 324.8) rotate(-90)" x="0" y="0" font-family="'Liberation Serif', serif" font-size="16" fill="#111" text-anchor="middle" textLength="14.7" lengthAdjust="spacingAndGlyphs">40</text>
<text transform="translate(52.5 387.3) rotate(-90)" x="0" y="0" font-family="'Liberation Serif', serif" font-size="16" fill="#111" text-anchor="middle" textLength="14.7" lengthAdjust="spacingAndGlyphs">50</text>
<text transform="translate(52.5 449.8) rotate(-90)" x="0" y="0" font-family="'Liberation Serif', serif" font-size="16" fill="#111" text-anchor="middle" textLength="14.7" lengthAdjust="spacingAndGlyphs">60</text>
<text transform="translate(52.5 512.3) rotate(-90)" x="0" y="0" font-family="'Liberation Serif', serif" font-size="16" fill="#111" text-anchor="middle" textLength="14.7" lengthAdjust="spacingAndGlyphs">70</text>
<text transform="translate(52.5 574.8) rotate(-90)" x="0" y="0" font-family="'Liberation Serif', serif" font-size="16" fill="#111" text-anchor="middle" textLength="14.7" lengthAdjust="spacingAndGlyphs">80</text>
<text transform="translate(52.5 637.3) rotate(-90)" x="0" y="0" font-family="'Liberation Serif', serif" font-size="16" fill="#111" text-anchor="middle" textLength="14.7" lengthAdjust="spacingAndGlyphs">90</text>
<rect x="794" y="143.5" width="1.1" height="30" fill="#2a2a80"/>
<rect x="34.3" y="342.7" width="27.8" height="1.1" fill="#2a2a80"/>
<g clip-path="url(#cv)"><path d="M87.57 179 V648 M150.10 179 V648 M212.63 179 V648 M275.16 179 V648 M337.69 179 V648 M400.22 179 V648 M462.75 179 V648 M525.28 179 V648 M587.81 179 V648 M650.34 179 V648 M712.87 179 V648 M775.40 179 V648 M837.93 179 V648 M900.46 179 V648 M962.99 179 V648 M70 200.50 H935 M70 263.01 H935 M70 325.52 H935 M70 388.03 H935 M70 450.54 H935 M70 513.05 H935 M70 575.56 H935 M70 638.07 H935" stroke="#8cfcff" stroke-width="1.6"/><g transform="translate(0 0)"><path d="M312.8 212.5 V231.2 M293.90000000000003 232.3 L312.8 269.2 V287.3 M312.8 288.7 V546.7 M337.8 212.5 V231.2 M318.90000000000003 232.3 L337.8 269.2 V287.3 M337.8 288.7 V537.5 M362.8 212.5 V231.2 M343.90000000000003 232.3 L362.8 269.2 V287.3 M362.8 288.7 V547.1 M264.9 244.1 V256.3 M264.9 250.2 H272 M276.2 250.2 H279.5 L284.2 257.5 L288.2 250.2 H291.8 M297.2 250.2 H309.3 M319.7 250.2 H332.2 M341 250.2 H352.2 M286.8 325.5 H418.7 M293.4 488 H412.1" fill="none" stroke="#262626" stroke-width="1.4"/><path d="M387.7 212.5 V550.7 H437.7 V625.7 H387.3 L368.7 607.5" fill="none" stroke="#38e038" stroke-width="1.6"/><path d="M387.7 212.5 V550.7 H437.7 V625.7 H387.3 L368.7 607.5" fill="none" stroke="#fff033" stroke-width="1.6" stroke-dasharray="14.4 16.6" stroke-dashoffset="-14.4"/><rect x="300.7" y="413.4" width="75" height="24.4" fill="#c0c0c0"/><rect x="375.7" y="413.4" width="12" height="24.4" fill="#00ee00"/><rect x="387.7" y="413.4" width="12.5" height="24.4" fill="#ffff80"/><path d="M300.7 413.4 H400.2 V437.8 H300.7 Z M325.5 413.4 V437.8 M350.5 413.4 V437.8 M375.5 413.4 V437.8" fill="none" stroke="#262626" stroke-width="1.5"/><text x="312.8" y="432.7" font-size="17" fill="#222" text-anchor="middle">1</text><text x="337.8" y="432.7" font-size="17" fill="#222" text-anchor="middle">2</text><text x="362.8" y="432.7" font-size="17" fill="#222" text-anchor="middle">3</text><text x="386.9" y="432.7" font-size="17" fill="#111" text-anchor="middle" textLength="20" lengthAdjust="spacingAndGlyphs">PE</text><circle cx="337.6" cy="575.5" r="38" fill="none" stroke="#333" stroke-width="1.2"/><text x="337.5" y="574.9" font-size="24" fill="#111" text-anchor="middle" textLength="17" lengthAdjust="spacingAndGlyphs">M</text><text x="316" y="597.5" font-size="24" fill="#111" textLength="13" lengthAdjust="spacingAndGlyphs">3</text><path d="M331.6 587.6 Q334 582 337.8 581.8 Q340.5 582 343 585.5 L348 592 Q350.5 595 353 592.5 L356.2 588.6" fill="none" stroke="#111" stroke-width="2.3" stroke-linecap="round" stroke-linejoin="round"/><path d="M362.6 612.6 L374.1 601.8" stroke="#262626" stroke-width="1.3"/></g><text x="190.2" y="244.8" font-size="18" fill="#138813">Sch1</text><text x="281.8" y="317.9" font-size="18" fill="#138813" text-anchor="end">w3</text><text x="281.3" y="343.7" font-size="18" fill="#ff00ff" text-anchor="end">CYKY 4x1,5</text><text x="282.8" y="420.2" font-size="18" fill="#138813" text-anchor="end">X1</text><text x="279.5" y="479.7" font-size="18" fill="#138813" text-anchor="end">w1</text><text x="281.3" y="505.6" font-size="18" fill="#ff00ff" text-anchor="end">CYKY 4x2,5</text><text x="282.3" y="570" font-size="18" fill="#138813" text-anchor="end">M1</text><g transform="translate(337.7 0)"><path d="M312.8 212.5 V231.2 M293.90000000000003 232.3 L312.8 269.2 V287.3 M312.8 288.7 V546.7 M337.8 212.5 V231.2 M318.90000000000003 232.3 L337.8 269.2 V287.3 M337.8 288.7 V537.5 M362.8 212.5 V231.2 M343.90000000000003 232.3 L362.8 269.2 V287.3 M362.8 288.7 V547.1 M264.9 244.1 V256.3 M264.9 250.2 H272 M276.2 250.2 H279.5 L284.2 257.5 L288.2 250.2 H291.8 M297.2 250.2 H309.3 M319.7 250.2 H332.2 M341 250.2 H352.2 M293.5 325.5 H412.6 M293.8 488 H412" fill="none" stroke="#262626" stroke-width="1.4"/><path d="M387.7 212.5 V550.7 H437.7 V625.7 H387.3 L368.7 607.5" fill="none" stroke="#38e038" stroke-width="1.6"/><path d="M387.7 212.5 V550.7 H437.7 V625.7 H387.3 L368.7 607.5" fill="none" stroke="#fff033" stroke-width="1.6" stroke-dasharray="14.4 16.6" stroke-dashoffset="-14.4"/><rect x="300.7" y="413.4" width="75" height="24.4" fill="#c0c0c0"/><rect x="375.7" y="413.4" width="12" height="24.4" fill="#00ee00"/><rect x="387.7" y="413.4" width="12.5" height="24.4" fill="#ffff80"/><path d="M300.7 413.4 H400.2 V437.8 H300.7 Z M325.5 413.4 V437.8 M350.5 413.4 V437.8 M375.5 413.4 V437.8" fill="none" stroke="#262626" stroke-width="1.5"/><text x="312.8" y="432.7" font-size="17" fill="#222" text-anchor="middle">1</text><text x="337.8" y="432.7" font-size="17" fill="#222" text-anchor="middle">2</text><text x="362.8" y="432.7" font-size="17" fill="#222" text-anchor="middle">3</text><text x="386.9" y="432.7" font-size="17" fill="#111" text-anchor="middle" textLength="20" lengthAdjust="spacingAndGlyphs">PE</text><circle cx="337.6" cy="575.5" r="38" fill="none" stroke="#333" stroke-width="1.2"/><text x="337.5" y="574.9" font-size="24" fill="#111" text-anchor="middle" textLength="17" lengthAdjust="spacingAndGlyphs">M</text><text x="316" y="597.5" font-size="24" fill="#111" textLength="13" lengthAdjust="spacingAndGlyphs">3</text><path d="M331.6 587.6 Q334 582 337.8 581.8 Q340.5 582 343 585.5 L348 592 Q350.5 595 353 592.5 L356.2 588.6" fill="none" stroke="#111" stroke-width="2.3" stroke-linecap="round" stroke-linejoin="round"/><path d="M362.6 612.6 L374.1 601.8" stroke="#262626" stroke-width="1.3"/></g><text x="527.9" y="244.8" font-size="18" fill="#138813">Sch2</text><text x="619.5" y="317.9" font-size="18" fill="#138813" text-anchor="end">w4</text><text x="619.0" y="343.7" font-size="18" fill="#ff00ff" text-anchor="end">CYKY 4x1,5</text><text x="620.5" y="420.2" font-size="18" fill="#138813" text-anchor="end">X2</text><text x="617.2" y="479.7" font-size="18" fill="#138813" text-anchor="end">w2</text><text x="619.0" y="505.6" font-size="18" fill="#ff00ff" text-anchor="end">CYKY 4x2,5</text><text x="620.0" y="570" font-size="18" fill="#138813" text-anchor="end">M2</text></g>
<rect x="2" y="137" width="954" height="2" fill="#5f7fbf"/>
<path d="M1 141.5 H22.8 Q26 141.5 26 144.7 V168.10000000000002 Q26 171.3 22.8 171.3 H1" fill="url(#tabBl)" stroke="#5a84c8" stroke-width="1.6"/>
<path d="M13.3 164.6 L5.2 156.4 Q3.6 154.3 4.4 152 Q5.6 149 9 148.8 Q11.9 148.8 13.6 151.6 Q15.4 148.8 18.3 148.8 Q21.9 149 22.3 152.6 Q22.5 155 20.6 157.3 Z" fill="#f00000" stroke="#9a1a1a" stroke-width="0.9"/><path d="M5.6 152.3 Q6.8 150.2 9.2 150.3 L11.4 152.8 L8.6 156.4 L5.8 153.8 Z" fill="#dde8f8"/>
<path d="M1 172.7 H22.8 Q26 172.7 26 175.89999999999998 V324.8 Q26 328 22.8 328 H1" fill="url(#tabOr)" stroke="#4a70b4" stroke-width="1.6"/>
<path d="M11.7 182.9 H17.9 M15.1 182.9 V190.5 H17.9" fill="none" stroke="#8a8a8a" stroke-width="1.1"/><rect x="4.2" y="178.5" width="7.5" height="7.4" fill="#0000ff"/><path d="M11.7 178.8 V185.9 H4.4" fill="none" stroke="#000" stroke-width="1"/><rect x="17.9" y="179.9" width="6.1" height="6" fill="#ffff00"/><path d="M24 180.2 V185.9 H18" fill="none" stroke="#000" stroke-width="1"/><rect x="17.9" y="188.7" width="6.1" height="6.1" fill="#00ffff"/><path d="M24 189 V194.8 H18" fill="none" stroke="#000" stroke-width="1"/>
<text transform="translate(9 200.7) rotate(90)" font-size="14.8" fill="#1b1b2e" textLength="122" lengthAdjust="spacingAndGlyphs">Symbols Textually</text>
<path d="M1 346.8 H22.8 Q26 346.8 26 350.0 V455.8 Q26 459 22.8 459 H1" fill="url(#tabOr)" stroke="#4a70b4" stroke-width="1.6"/>
<path d="M5.3 355 Q5.3 354.3 6 354.3 H12.6 Q13.3 354.3 13.3 355 V356.6 H22 Q22.7 356.6 22.7 357.3 V368.8 Q22.7 369.5 22 369.5 H6 Q5.3 369.5 5.3 368.8 Z" fill="#ffff00" stroke="#7d7d00" stroke-width="1.1"/>
<text transform="translate(9 373.8) rotate(90)" font-size="14.8" fill="#1b1b2e" textLength="79" lengthAdjust="spacingAndGlyphs">Documents</text>
<path d="M1 477 H22.8 Q26 477 26 480.2 V648.3 Q26 651.5 22.8 651.5 H1" fill="url(#tabOr)" stroke="#4a70b4" stroke-width="1.6"/>
<path d="M14.5 489.8 L10.5 494.5 M14.5 489.8 L18.3 494.5" stroke="#222" stroke-width="1"/><rect x="11.5" y="483.5" width="6" height="6" fill="#00ffff" stroke="#000" stroke-width="1"/><rect x="5.2" y="494.5" width="6" height="6.2" fill="#ff0000" stroke="#000" stroke-width="1"/><rect x="17.6" y="494.5" width="6" height="6.2" fill="#00ff00" stroke="#000" stroke-width="1"/>
<text transform="translate(9 503.6) rotate(90)" font-size="14.8" fill="#1b1b2e" textLength="135.5" lengthAdjust="spacingAndGlyphs">Symbols Graphically</text>
<rect x="956" y="139" width="29" height="531" fill="#a4c1f0"/>
<rect x="955" y="139" width="2" height="531" fill="#ffffff"/>
<path d="M986 142.6 H963.7 Q960.5 142.6 960.5 145.79999999999998 V188.3 Q960.5 191.5 963.7 191.5 H986" fill="url(#tabOrR)" stroke="#4a70b4" stroke-width="1.6"/>
<path d="M963.8 151 H966.5 M963.8 155.6 H966.5 M963.8 160.6 H966.5 M978.6 151 H981.2 M978.6 155.6 H981.2 M978.6 160.6 H981.2" stroke="#111" stroke-width="1.1"/><path d="M963.8 152.3 H966.5 M963.8 157 H966.5 M963.8 162 H966.5 M978.6 152.3 H981.2 M978.6 157 H981.2 M978.6 162 H981.2" stroke="#a09070" stroke-width="1"/><path d="M967.3 149.9 H970.5 L971.3 151.4 Q972.5 152.6 973.7 151.4 L974.5 149.9 H977.8 V163.8 H967.3 Z" fill="#00ffff" stroke="#111" stroke-width="1.3" stroke-linejoin="round"/>
<text transform="translate(967 170) rotate(90)" font-size="14.8" fill="#1b1b2e" textLength="15.5" lengthAdjust="spacingAndGlyphs">IC</text>
<path d="M986 209.5 H963.7 Q960.5 209.5 960.5 212.7 V287.40000000000003 Q960.5 290.6 963.7 290.6 H986" fill="url(#tabOrR)" stroke="#4a70b4" stroke-width="1.6"/>
<rect x="972.3" y="223.8" width="9" height="10.5" fill="#0000ff" stroke="#000" stroke-width="1.1"/><rect x="968.3" y="219.8" width="9" height="10.5" fill="#00ee00" stroke="#000" stroke-width="1.1"/><rect x="964.4" y="215.8" width="8.6" height="10.5" fill="#ff0000" stroke="#000" stroke-width="1.1"/>
<text transform="translate(967 237.6) rotate(90)" font-size="14.8" fill="#1b1b2e" textLength="47" lengthAdjust="spacingAndGlyphs">Layers</text>
<path d="M986 308.3 H963.7 Q960.5 308.3 960.5 311.5 V383.1 Q960.5 386.3 963.7 386.3 H986" fill="url(#tabOrR)" stroke="#4a70b4" stroke-width="1.6"/>
<rect x="965.8" y="314.8" width="13.4" height="18.2" fill="#fff" stroke="#111" stroke-width="1.5"/><circle cx="969.9" cy="318.7" r="1.6" fill="#ffe0a0" stroke="#222" stroke-width="1.1"/><circle cx="969.9" cy="328.6" r="1.6" fill="#ffe0a0" stroke="#222" stroke-width="1.1"/><path d="M981.7 322.8 V331" stroke="#333" stroke-width="1.3"/>
<text transform="translate(967 337.6) rotate(90)" font-size="14.8" fill="#1b1b2e" textLength="45" lengthAdjust="spacingAndGlyphs">Pages</text>
<path d="M986 404.5 H963.7 Q960.5 404.5 960.5 407.7 V485.3 Q960.5 488.5 963.7 488.5 H986" fill="url(#tabOrR)" stroke="#4a70b4" stroke-width="1.6"/>
<path d="M965 411 H968.5 V414.5 H969.8 V418 L971.2 418 V414.5 H972.5 V411 H976 V414.5 H977.2 V419 L980 420.5 V427.5 H974.2 V423.5 H972.2 V421 H969.8 V424.5 H967.8 V427.5 H962.5 V420 L963.8 418.5 V414.5 H965 Z" fill="#111"/><rect x="965.2" y="419" width="1.2" height="3.5" fill="#d8c090"/><rect x="972.8" y="419" width="1.2" height="3.5" fill="#d8c090"/>
<text transform="translate(967 432.6) rotate(90)" font-size="14.8" fill="#1b1b2e" textLength="50.7" lengthAdjust="spacingAndGlyphs">Search</text>
<path d="M986 505.4 H963.7 Q960.5 505.4 960.5 508.59999999999997 V623.5999999999999 Q960.5 626.8 963.7 626.8 H986" fill="url(#tabOrR)" stroke="#4a70b4" stroke-width="1.6"/>
<text transform="translate(967 511.9) rotate(90)" font-size="14.8" fill="#1b1b2e" textLength="108" lengthAdjust="spacingAndGlyphs">Cable manager</text>
<path d="M986 644.5 H963.7 Q960.5 644.5 960.5 647.7 V686.8 Q960.5 690 963.7 690 H986" fill="url(#tabOrR)" stroke="#4a70b4" stroke-width="1.6"/>
<rect x="964" y="650" width="15" height="11.5" fill="#fafafa"/><rect x="964" y="661" width="8" height="1.2" fill="#999"/><path d="M964.8 655.5 L970.2 650.5 L974 654.8 L968.5 659.5 Z" fill="#ffff00" stroke="#8a8a00" stroke-width="0.9"/><path d="M975.5 656.5 L979.5 652 L982.5 655.5 L978.5 659.5 Z" fill="#ee00ee" stroke="#7a007a" stroke-width="0.9"/><path d="M975.8 663 L979.3 659.5 L982 662.3 L978.5 666 Z" fill="#00cc00" stroke="#006000" stroke-width="0.9"/>
<rect x="2" y="670" width="983" height="23.5" fill="#f0f0f0"/>
<rect x="0" y="693.3" width="986" height="2" fill="#2e7b97"/>
<text x="5.3" y="688.6" font-size="14.5" fill="#1b1b2e" textLength="102" lengthAdjust="spacingAndGlyphs">ProfiCAD 11.3.0</text>
<text x="515.5" y="688.6" font-size="14.5" fill="#1b1b2e">/1.A3</text><text x="558" y="688.6" font-size="14.5" fill="#1b1b2e">x=123.0</text><text x="616.5" y="688.6" font-size="14.5" fill="#1b1b2e">y=43.0</text><text x="665" y="688.6" font-size="14.5" fill="#1b1b2e">(0)</text>
<text x="878" y="688.6" font-size="14.5" fill="#1b1b2e">NUM</text>
<path d="M833.5 672 V692" stroke="#d8d8d8" stroke-width="1" stroke-dasharray="1 1"/>
<path d="M872.5 672 V692" stroke="#d8d8d8" stroke-width="1" stroke-dasharray="1 1"/>
<path d="M917.5 672 V692" stroke="#d8d8d8" stroke-width="1" stroke-dasharray="1 1"/>
<path d="M961.5 672 V692" stroke="#d8d8d8" stroke-width="1" stroke-dasharray="1 1"/>
<rect x="980" y="683" width="2" height="2" fill="#b8b8b8"/>
<rect x="976" y="687" width="2" height="2" fill="#b8b8b8"/>
<rect x="980" y="687" width="2" height="2" fill="#b8b8b8"/>
<rect x="972" y="691" width="2" height="2" fill="#b8b8b8"/>
<rect x="976" y="691" width="2" height="2" fill="#b8b8b8"/>
<rect x="980" y="691" width="2" height="2" fill="#b8b8b8"/>
<rect x="0" y="0" width="986" height="1" fill="#1c1c1c"/><rect x="0" y="0" width="1.4" height="695" fill="#1c1c1c"/><rect x="1.4" y="40" width="0.8" height="654" fill="#2e7b97"/><rect x="985" y="40" width="1" height="654" fill="#2e7b97"/>
</svg></body></html>
